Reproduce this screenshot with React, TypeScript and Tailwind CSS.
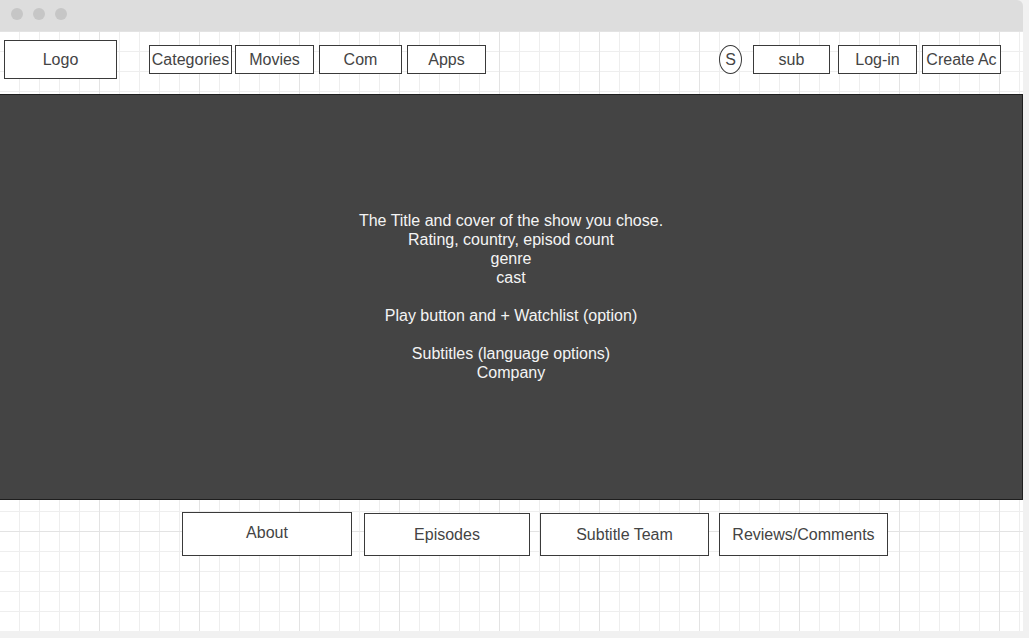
import React from "react";

const font = { fontFamily: '"Liberation Sans", Arial, sans-serif' };

function Box({ className, children }: { className: string; children: React.ReactNode }) {
  return (
    <div
      className={`box-border border border-[#3a3a3a] bg-white flex items-center justify-center text-[16px] leading-none text-[#444444] whitespace-nowrap overflow-hidden ${className}`}
    >
      {children}
    </div>
  );
}

export default function App() {
  const panelLines = [
    "The Title and cover of the show you chose.",
    "Rating, country, episod count",
    "genre",
    "cast",
    "\u00a0",
    "Play button and + Watchlist (option)",
    "\u00a0",
    "Subtitles (language options)",
    "Company",
  ];
  return (
    <div className="w-[1029px] h-[638px] bg-[#f1f1f1] overflow-hidden" style={font}>
      <div className="w-[1023px] h-[631px] flex flex-col">
        {/* title bar */}
        <div className="h-[31px] bg-[#dddddd] rounded-tr-[6px] flex items-center gap-[10px] pl-[11px] pb-[3px]">
          <div className="w-[12px] h-[12px] rounded-full bg-[#c6c6c6]" />
          <div className="w-[12px] h-[12px] rounded-full bg-[#c6c6c6]" />
          <div className="w-[12px] h-[12px] rounded-full bg-[#c6c6c6]" />
        </div>
        {/* content */}
        <div className="flex-1 flex flex-col bg-white bg-[linear-gradient(to_right,#e3e3e3_1px,transparent_1px),linear-gradient(to_bottom,#e3e3e3_1px,transparent_1px),linear-gradient(to_right,#eeeeee_1px,transparent_1px),linear-gradient(to_bottom,#eeeeee_1px,transparent_1px)] bg-[size:100px_100px,100px_100px,20px_20px,20px_20px] bg-[position:-1px_0px,-1px_0px,-1px_0px,-1px_0px]">
          {/* header */}
          <div className="h-[63px] flex items-start">
            <Box className="mt-[9px] ml-[4px] w-[113px] h-[39px]">Logo</Box>
            <Box className="mt-[14px] ml-[32px] w-[83px] h-[29px]">Categories</Box>
            <Box className="mt-[14px] ml-[3px] w-[79px] h-[29px]">Movies</Box>
            <Box className="mt-[14px] ml-[5px] w-[83px] h-[29px]">Com</Box>
            <Box className="mt-[14px] ml-[5px] w-[79px] h-[29px]">Apps</Box>
            <div className="mt-[14px] ml-auto box-border w-[23px] h-[29px] rounded-[50%] border border-[#3a3a3a] bg-white flex items-center justify-center text-[16px] leading-none text-[#444444]">
              S
            </div>
            <Box className="mt-[14px] ml-[11px] w-[77px] h-[29px]">sub</Box>
            <Box className="mt-[14px] ml-[8px] w-[79px] h-[29px]">Log-in</Box>
            <Box className="mt-[14px] ml-[5px] w-[79px] h-[29px] mr-[22px]">Create Ac</Box>
          </div>
          {/* hero panel */}
          <div className="h-[406px] box-border border-t border-b border-r border-[#1e1e1e] bg-[#444444] flex flex-col items-center justify-center pb-[1px]">
            {panelLines.map((l, i) => (
              <div key={i} className="text-[16px] leading-[19px] text-[#f4f4f4] text-center whitespace-nowrap">
                {l}
              </div>
            ))}
          </div>
          {/* tabs */}
          <div className="flex items-start pt-[12px]">
            <Box className="ml-[182px] w-[170px] h-[44px] pb-[2px]">About</Box>
            <Box className="mt-[1px] ml-[12px] w-[166px] h-[43px]">Episodes</Box>
            <Box className="mt-[1px] ml-[10px] w-[169px] h-[43px]">Subtitle Team</Box>
            <Box className="mt-[1px] ml-[10px] w-[169px] h-[43px]">Reviews/Comments</Box>
          </div>
        </div>
      </div>
    </div>
  );
}
